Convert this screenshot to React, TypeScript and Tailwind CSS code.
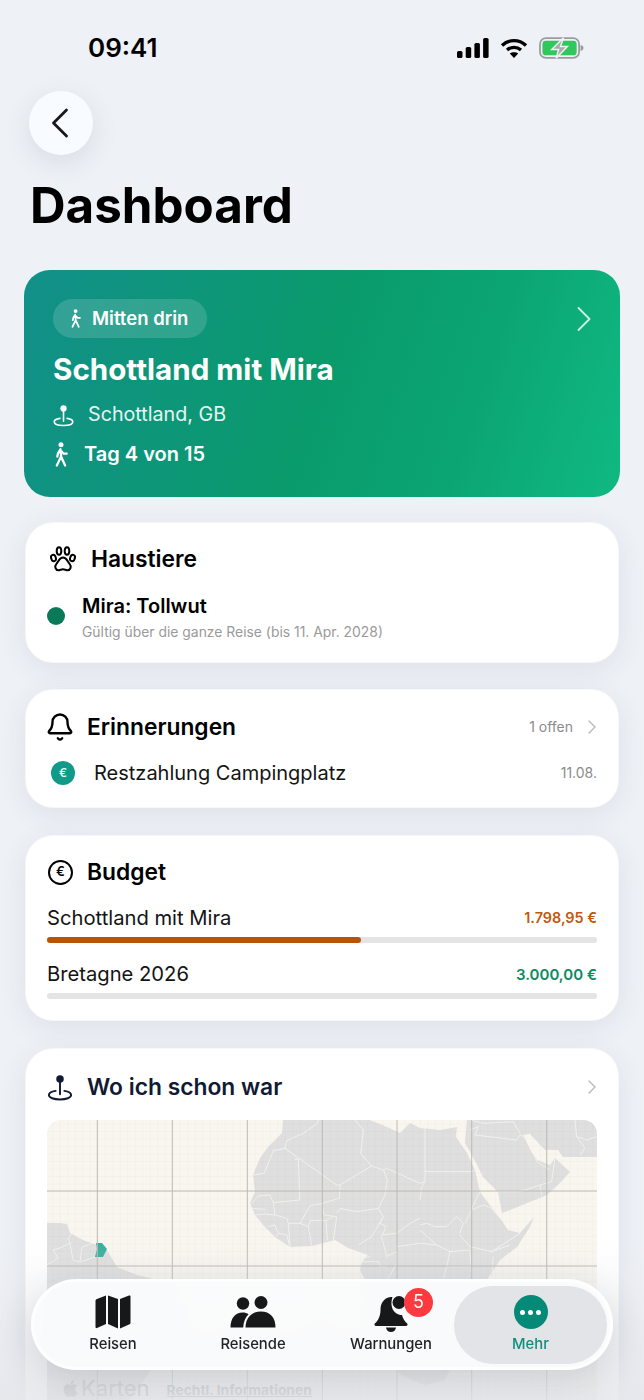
import { Bell, ChevronLeft, ChevronRight } from 'lucide-react';
import { FaApple } from 'react-icons/fa';
import { ReactNode } from 'react';

// country borders, west and north Africa
const bordersWest = [
  'M235 0 L230 12 L190 40 L140 62 L135 85 L290 195',
  'M135 85 L100 92 L85 130 L72 160 L40 165',
  'M165 118 L175 118 L180 240 L100 248 L90 225 L55 228 L35 250',
  'M290 195 L300 195 L298 235 L245 250 L210 258 L180 310 L145 310',
  'M300 195 L395 138 L430 150 L440 145 L540 190',
  'M345 0 L370 30 L362 100 L395 138',
  'M430 150 L442 180 L435 225 L415 265 L430 290 L420 310 L438 320 L425 350 L440 410',
  'M245 250 L252 285 L290 290 L280 360',
  'M290 280 L300 265 L350 275 L415 265',
  'M430 290 L395 350 L355 375',
  'M425 345 L470 340 L510 310 L540 295',
  'M440 410 L470 395 L470 430 L445 475',
  'M470 380 L540 370',
  'M100 248 L105 285 L140 295 L145 310 L150 380',
  'M45 285 L75 282 L105 285',
  'M35 265 L75 268',
  'M85 320 L105 315 L115 340 L108 350',
  'M115 340 L140 345 L150 380',
  'M180 310 L205 320 L215 375',
  'M205 320 L210 302 L258 302 L262 360',
  'M258 302 L280 290',
  'M365 425 L415 425 L420 440 L440 440',
  'M365 415 L390 410',
];

// east Africa and Arabia
const bordersEast = [
  'M15 155 L155 155 L165 150',
  'M15 25 L15 185 L0 190',
  'M0 240 L5 200 L15 185',
  'M0 315 L20 310 L45 320 L80 320 L110 290 L130 310 L120 340',
  'M155 270 L190 255 L215 265 L240 295',
  'M155 270 L135 310',
  'M120 345 L150 380 L215 395 L300 340',
  'M180 215 L160 255 L155 270',
  'M215 395 L270 375',
  'M220 410 L215 470',
  'M90 395 L150 390 L155 470',
  'M0 370 L50 375 L90 395 L80 440 L70 475',
  'M0 330 L50 375',
  'M80 440 L150 440',
  'M150 30 L175 20 L165 45 L290 60 L300 45 L310 50',
  'M235 215 L300 215 L360 195 L365 225',
  'M360 195 L395 185 L405 115',
  'M345 110 L350 125 L390 150',
  'M150 0 L190 10 L280 5 L300 40',
  'M465 0 L470 50 L500 60 L530 50',
  'M470 50 L495 85 L480 105',
];

const bordersAmerica = [
  'M53 1250 L60 1248 L70 1243 L68 1238 L73 1233',
  'M70 1243 L73 1260 L80 1262 L82 1247 L93 1243',
  'M80 1262 L95 1257',
  'M47 1265 L58 1258 L53 1250',
];

function WalkIcon({ className }: { className?: string }) {
  return (
    <svg viewBox="0 0 16 24" className={className} fill="none" stroke="currentColor" strokeWidth="2.2" strokeLinecap="round" strokeLinejoin="round">
      <circle cx="7.5" cy="2.6" r="2.4" fill="currentColor" stroke="none" />
      <path d="M7 7 L4.6 11 L4 14 M7 7 L7.6 14 L3.5 22.5 M7.6 14 L11.5 22.5 M8 9 L10 11.2 L13 11.2" />
    </svg>
  );
}

function PinIcon({ className }: { className?: string }) {
  return (
    <svg viewBox="0 0 26 28" className={className} fill="none" stroke="currentColor" strokeWidth="2" strokeLinecap="round">
      <circle cx="13" cy="5.2" r="3.9" fill="currentColor" stroke="none" />
      <path d="M13 8 V21" />
      <path d="M8.5 17.5 C4 18.2 1.5 19.6 1.5 21.8 C1.5 24.6 6.5 26.4 13 26.4 C19.5 26.4 24.5 24.6 24.5 21.8 C24.5 19.6 22 18.2 17.5 17.5" />
    </svg>
  );
}

function PawIcon() {
  return (
    <svg viewBox="0 0 26 26" className="h-[26px] w-[26px]" fill="none" stroke="black" strokeWidth="2">
      <ellipse cx="3.5" cy="12" rx="2.3" ry="3.3" transform="rotate(-18 3.5 12)" />
      <ellipse cx="9" cy="5" rx="2.3" ry="3.7" />
      <ellipse cx="17" cy="5" rx="2.3" ry="3.7" />
      <ellipse cx="22.5" cy="12" rx="2.3" ry="3.3" transform="rotate(18 22.5 12)" />
      <path d="M13 11.5 C9.5 11.5 8.8 15 6.6 17.6 C4 20.6 5.5 24.6 9 24.2 C10.5 24 11.5 23.3 13 23.3 C14.5 23.3 15.5 24 17 24.2 C20.5 24.6 22 20.6 19.4 17.6 C17.2 15 16.5 11.5 13 11.5 Z" />
    </svg>
  );
}

function StatusBar() {
  return (
    <div className="flex h-[91px] items-start justify-between pl-[88px] pr-[60px] pt-[31px]">
      <span className="text-[26px] font-semibold leading-[34px] text-black">09:41</span>
      <div className="mt-[6px] flex items-center">
        <svg viewBox="0 0 32 20" className="h-5 w-8" fill="black">
          <rect x="0" y="13" width="5.5" height="7" rx="1.6" />
          <rect x="8.7" y="9" width="5.5" height="11" rx="1.6" />
          <rect x="17.4" y="5" width="5.5" height="15" rx="1.6" />
          <rect x="26.1" y="0" width="5.5" height="20" rx="1.6" />
        </svg>
        <svg viewBox="0 0 28 20" className="ml-[11px] h-5 w-7" fill="none" stroke="black" strokeWidth="3.4" strokeLinecap="butt">
          <path d="M2 7.5 C9 1 19 1 26 7.5" />
          <path d="M7 12 C11 8.5 17 8.5 21 12" />
          <path d="M14 20 L9.8 15.6 C12 13.8 16 13.8 18.2 15.6 Z" fill="black" stroke="none" />
        </svg>
        <svg viewBox="0 0 46 22" className="ml-[11px] h-[22px] w-[45px]">
          <rect x="1" y="1" width="40" height="20" rx="6" fill="none" stroke="#9a9c9e" strokeWidth="1.8" />
          <rect x="3.5" y="3.5" width="35" height="15" rx="3.5" fill="#30c85a" />
          <path d="M42.5 8 C44.5 8.5 45.5 9.5 45.5 11 C45.5 12.5 44.5 13.5 42.5 14 Z" fill="#9a9c9e" />
          <path d="M25 0.5 L13 12.5 H20 L17.5 21.5 L29 9.5 H22 Z" fill="#a9abad" stroke="#eef1f6" strokeWidth="1.5" />
        </svg>
      </div>
    </div>
  );
}

function TripHero() {
  return (
    <div className="mx-6 mt-[36px] h-[227px] rounded-[26px] bg-[linear-gradient(108deg,#12908a_0%,#0a9a6c_48%,#0ba573_74%,#10b981_100%)] px-[29px] pt-[29px] text-white">
      <div className="flex items-center justify-between">
        <div className="flex h-[39px] w-[154px] items-center gap-[9px] rounded-full bg-white/15 pl-4">
          <WalkIcon className="h-[19px] w-[14px]" />
          <span className="text-[18.5px] font-semibold leading-none">Mitten drin</span>
        </div>
        <ChevronRight className="-my-[3px] -mr-[15px] h-11 w-11 text-white/80" strokeWidth={1} />
      </div>
      <div className="mt-[12px] text-[29.6px] font-bold leading-[38px]">Schottland mit Mira</div>
      <div className="mt-[14px] flex h-[26px] items-center">
        <PinIcon className="h-[23px] w-[21px]" />
        <span className="ml-[14px] text-[19.7px] leading-none text-white/90">Schottland, GB</span>
      </div>
      <div className="mt-[13px] flex h-[26px] items-center">
        <WalkIcon className="h-[25px] w-[17px]" />
        <span className="ml-[14px] text-[20px] font-semibold leading-none">Tag 4 von 15</span>
      </div>
    </div>
  );
}

function Card({ className, children }: { className: string; children: ReactNode }) {
  return (
    <div className={`mx-[25px] rounded-[28px] border border-[#f5f7f9] bg-white shadow-[0_6px_28px_rgba(60,75,100,0.09)] ${className}`}>
      {children}
    </div>
  );
}

function BudgetRow({ name, amount, color, fill }: { name: string; amount: string; color: string; fill: number }) {
  return (
    <div>
      <div className="flex items-center justify-between">
        <span className="text-[20.2px] leading-[28px] text-[#141414]">{name}</span>
        <span className={`font-semibold leading-none ${color}`}>{amount}</span>
      </div>
      <div className="mt-[5px] h-[6px] rounded-full bg-[#e4e4e4]">
        <div className="h-full rounded-full bg-[#b8540a]" style={{ width: `${fill}%` }} />
      </div>
    </div>
  );
}

// drawn in page pixels: the viewBox is the map's place on the page
function WorldMap() {
  return (
    <svg viewBox="47 1120 550 280" className="block h-full w-full">
      <defs>
        <pattern id="minor" x="247.3" y="1191" width="7.5" height="7.5" patternUnits="userSpaceOnUse">
          <path d="M0 0 V7.5 M0 0 H7.5" fill="none" stroke="#b4aa96" strokeOpacity="0.12" strokeWidth="1" />
        </pattern>
      </defs>
      <rect x="47" y="1120" width="550" height="280" fill="#f9f6f0" />
      {/* Africa */}
      <path
        d="M283 1120 L282 1133 L268 1147 L260 1158 L253 1175 L255 1192 L250 1203 L255 1215 L264 1226 L275 1237 L290 1247 L312 1246 L335 1240 L348 1248 L368 1255 L362 1262 L360 1270 L364 1278 L372 1300 L385 1340 L400 1375 L425 1385 L445 1380 L465 1340 L470 1310 L488 1278 L500 1260 L517 1247 L530 1227 L534 1217 L520 1233 L508 1230 L500 1218 L495 1212 L480 1192 L475 1170 L467 1153 L456 1137 L457 1127 L440 1130 L420 1128 L410 1123 L400 1133 L387 1127 L370 1120 Z"
        fill="#dfdfdf"
      />
      {/* Arabia, Turkey and Iran */}
      <path
        d="M467 1120 L465 1143 L473 1157 L483 1177 L498 1192 L502 1213 L520 1206 L547 1195 L560 1183 L570 1172 L555 1158 L550 1165 L537 1160 L532 1153 L523 1135 L530 1134 L545 1150 L558 1150 L563 1157 L597 1157 L597 1120 Z"
        fill="#dfdfdf"
      />
      {/* South America */}
      <path
        d="M47 1223 L60 1223 L67 1224 L70 1233 L83 1240 L97 1245 L107 1250 L117 1267 L137 1275 L150 1278 L175 1300 L165 1350 L130 1400 L47 1400 Z"
        fill="#dfdfdf"
      />
      <rect x="47" y="1120" width="550" height="280" fill="url(#minor)" />
      <g transform="translate(240 1120) scale(0.3333)">
        {bordersWest.map((d) => (
          <path key={d} d={d} fill="none" stroke="#f0f0ef" strokeWidth="1" vectorEffect="non-scaling-stroke" />
        ))}
      </g>
      <g transform="translate(420 1120) scale(0.3333)">
        {bordersEast.map((d) => (
          <path key={d} d={d} fill="none" stroke="#f0f0ef" strokeWidth="1" vectorEffect="non-scaling-stroke" />
        ))}
      </g>
      {bordersAmerica.map((d) => (
        <path key={d} d={d} fill="none" stroke="#f0f0ef" strokeWidth="1" />
      ))}
      <path d="M96 1243 L102 1243 L107 1249 L103 1257 L95 1257 L97 1249 Z" fill="#36ad9c" />
      {[97.3, 172.3, 247.3, 322.3, 397, 471.7, 546.7].map((x) => (
        <path key={x} d={`M${x} 1120 V1400`} stroke="#bdbab4" strokeWidth="1" />
      ))}
      {[1191, 1266, 1341].map((y) => (
        <path key={y} d={`M47 ${y} H597`} stroke="#bdbab4" strokeWidth="1" />
      ))}
    </svg>
  );
}

function TabBar() {
  return (
    <div className="absolute left-[31px] top-[1279px] flex h-[91px] w-[582px] items-center rounded-[46px] border-[3px] border-white/70 bg-[#fafbfc]/95 pl-[9px] shadow-[0_10px_36px_rgba(50,60,80,0.16)] backdrop-blur-md">
      <div className="flex w-[140px] flex-col items-center">
        <svg viewBox="0 0 36 34" className="h-[34px] w-9" fill="#17181a">
          <path d="M11 0.5 V29 L2 33 C1 33.4 0.5 33 0.5 32 V6 C0.5 5 1 4.4 2 4 Z" />
          <path d="M13 0.5 L23 4 V33.5 L13 29 Z" />
          <path d="M25 4 L34 0.5 C35 0.2 35.5 0.7 35.5 1.5 V27.5 C35.5 28.5 35 29.2 34 29.6 L25 33.5 Z" />
        </svg>
        <span className="mt-[5px] text-[14.8px] font-medium leading-5 text-[#222326]">Reisen</span>
      </div>
      <div className="flex w-[140px] flex-col items-center">
        <svg viewBox="0 0 46 32" className="h-[34px] w-[46px]" fill="#17181a">
          <circle cx="13" cy="7.5" r="6.2" />
          <circle cx="31" cy="6.5" r="6.5" />
          <path d="M0.5 31.5 C0.5 22 5.5 16.5 12.5 16.5 C15 16.5 17 17.2 18.6 18.2 C15.5 21 13.6 25.5 13.2 31.5 Z" />
          <path d="M15.5 31.5 C15.5 21.5 22 15.5 31 15.5 C40 15.5 45.5 21.5 45.5 31.5 Z" />
        </svg>
        <span className="mt-[5px] text-[14.8px] font-medium leading-5 text-[#222326]">Reisende</span>
      </div>
      <div className="relative flex w-[136px] flex-col items-center">
        <svg viewBox="0 0 34 36" className="h-[36px] w-[34px]" fill="#17181a">
          <path d="M17 1 C9 2 6.5 8 6.5 14 C6.5 20 4 25 0.8 27.5 C0 28.4 0.5 30 2 30 H32 C33.5 30 34 28.4 33.2 27.5 C31 25.5 29 23 28 19 C21 19 15 12 18.5 1 Z" />
          <path d="M12 31.5 H22 C21.5 34.5 19.5 36 17 36 C14.5 36 12.5 34.5 12 31.5 Z" />
          <circle cx="25" cy="6.5" r="6.5" />
        </svg>
        <span className="mt-[2px] text-[14.8px] font-medium leading-5 text-[#222326]">Warnungen</span>
        <span className="absolute left-[81px] top-[-8px] flex h-[29px] w-[29px] items-center justify-center rounded-full bg-[#fd3a3f] text-[18px] leading-none text-white">
          5
        </span>
      </div>
      <div className="-ml-[5px] flex h-[78px] w-[153px] flex-col items-center justify-center rounded-[39px] bg-[#e3e4e7]">
        <div className="flex h-[34px] w-[34px] items-center justify-center gap-[3px] rounded-full bg-[#048a77]">
          <span className="h-[5px] w-[5px] rounded-full bg-white" />
          <span className="h-[5px] w-[5px] rounded-full bg-white" />
          <span className="h-[5px] w-[5px] rounded-full bg-white" />
        </div>
        <span className="mt-[5px] text-[14.8px] font-medium leading-5 text-[#0f8f7e]">Mehr</span>
      </div>
    </div>
  );
}

export default function App() {
  return (
    <div className="relative h-[1400px] overflow-hidden bg-[#eef1f6] font-['Inter',sans-serif]">
      <StatusBar />
      <div className="ml-[29px] flex h-16 w-16 items-center justify-center rounded-full bg-[#f8fbff] shadow-[0_8px_28px_rgba(40,50,70,0.1)]">
        <ChevronLeft className="mr-[3px] h-[52px] w-[52px] text-[#17181a]" strokeWidth={1.3} />
      </div>
      <h1 className="ml-[30px] mt-[21px] text-[49.3px] font-bold leading-[58px] text-black">Dashboard</h1>

      <TripHero />

      <Card className="mt-[25px] h-[141px] pl-[21px] pt-[22px]">
        <div className="flex h-7 items-center">
          <div className="ml-[3px]">
            <PawIcon />
          </div>
          <span className="ml-[15px] text-[22.8px] font-semibold leading-none text-black">Haustiere</span>
        </div>
        <div className="mt-[21px] flex items-center">
          <span className="mb-[4px] h-[18px] w-[18px] rounded-full bg-[#087a57]" />
          <div className="ml-[17px]">
            <div className="text-[20px] font-semibold leading-6 text-black">Mira: Tollwut</div>
            <div className="mt-[5px] text-[13.9px] leading-[18px] text-[#9a9a9a]">Gültig über die ganze Reise (bis 11. Apr. 2028)</div>
          </div>
        </div>
      </Card>

      <Card className="mt-[26px] h-[119px] px-[21px] pt-[23px]">
        <div className="flex h-7 items-center">
          <Bell className="-ml-[2px] h-[30px] w-[30px] text-black" strokeWidth={1.9} />
          <span className="ml-[12px] text-[22.8px] font-semibold leading-none text-black">Erinnerungen</span>
          <span className="ml-auto text-[14px] leading-none text-[#8b8b8b]">1 offen</span>
          <ChevronRight className="-mr-[7px] ml-[7px] h-6 w-6 text-[#b9b9b9]" strokeWidth={1.4} />
        </div>
        <div className="mt-[20px] flex h-6 items-center">
          <span className="ml-[4px] flex h-6 w-6 items-center justify-center rounded-full bg-[#119a88] text-[12px] font-medium text-white">€</span>
          <span className="ml-[19px] text-[20px] leading-none text-[#141414]">Restzahlung Campingplatz</span>
          <span className="ml-auto text-[14px] leading-none text-[#8b8b8b]">11.08.</span>
        </div>
      </Card>

      <Card className="mt-[27px] h-[186px] px-[21px] pt-[22px]">
        <div className="flex h-7 items-center">
          <span className="ml-[1px] flex h-[25px] w-[25px] items-center justify-center rounded-full border-[2.5px] border-black text-[13px] font-semibold text-black">€</span>
          <span className="ml-[14px] text-[22.8px] font-semibold leading-none text-black">Budget</span>
        </div>
        <div className="mt-[18px] text-[14.4px]">
          <BudgetRow name="Schottland mit Mira" amount="1.798,95 €" color="text-[#c2570f]" fill={57} />
        </div>
        <div className="mt-[17px] text-[15px]">
          <BudgetRow name="Bretagne 2026" amount="3.000,00 €" color="text-[#0d8a62]" fill={0} />
        </div>
      </Card>

      <Card className="mt-[27px] h-[420px] px-[21px] pt-[24px]">
        <div className="flex h-7 items-center">
          <PinIcon className="h-[27px] w-[26px] text-[#111a33]" />
          <span className="ml-[14px] text-[22.8px] font-semibold leading-none text-[#111a33]">Wo ich schon war</span>
          <ChevronRight className="-mr-[7px] ml-auto h-6 w-6 text-[#b9b9b9]" strokeWidth={1.4} />
        </div>
        <div className="relative mt-[19px] h-[280px] overflow-hidden rounded-t-[14px]">
          <WorldMap />
          <div className="absolute bottom-[1px] left-[14px] flex items-center text-[#a9a9a9]">
            <FaApple className="h-[19px] w-[19px]" />
            <span className="ml-[1px] text-[22px] leading-none">Karten</span>
            <span className="ml-[17px] mt-[5px] text-[13.8px] font-bold leading-none underline">Rechtl. Informationen</span>
          </div>
        </div>
      </Card>

      {/* fade behind the tab bar */}
      <div className="absolute inset-x-0 bottom-0 h-[160px] bg-gradient-to-b from-[#eef1f6]/0 to-[#e4e6ea]/80" />
      <TabBar />
    </div>
  );
}
